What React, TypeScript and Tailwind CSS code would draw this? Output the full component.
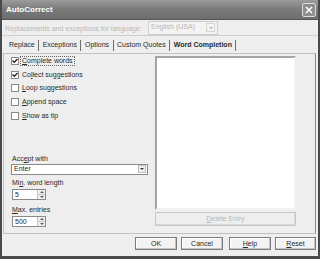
import React from "react";

const font = { fontFamily: '"Liberation Sans", Arial, sans-serif' };

function U({ children }: { children: React.ReactNode }) {
  return <span className="underline underline-offset-[1px] decoration-[0.5px]">{children}</span>;
}

function Check({ checked, children, focus }: { checked?: boolean; children: React.ReactNode; focus?: boolean }) {
  return (
    <div className="flex items-center h-[13.8px]">
      <div className="w-[8px] h-[8px] border border-[#8a8a8a] bg-white flex items-center justify-center mr-[2px] shrink-0">
        {checked && (
          <svg width="6" height="6" viewBox="0 0 6 6">
            <path d="M0.5 2.5 L2.3 4.3 L5.5 1" stroke="#222" strokeWidth="1.3" fill="none" />
          </svg>
        )}
      </div>
      <span className={focus ? "outline outline-1 outline-dotted outline-[#666] px-[1px] leading-[8px]" : "px-[1px] leading-[8px]"}>{children}</span>
    </div>
  );
}

function Spin({ value }: { value: string }) {
  return (
    <div className="flex w-[34px] h-[11px] border border-[#8a8a8a] bg-white">
      <div className="flex-1 pl-[2px] leading-[9px]">{value}</div>
      <div className="w-[8px] flex flex-col border-l border-[#c4c4c4] bg-[#f0f0f0]">
        <div className="flex-1 flex items-center justify-center border-b border-[#c4c4c4]">
          <svg width="4" height="2" viewBox="0 0 4 2"><path d="M0 2 L2 0 L4 2Z" fill="#555" /></svg>
        </div>
        <div className="flex-1 flex items-center justify-center">
          <svg width="4" height="2" viewBox="0 0 4 2"><path d="M0 0 L2 2 L4 0Z" fill="#555" /></svg>
        </div>
      </div>
    </div>
  );
}

function Btn({ children, w, extra = "" }: { children: React.ReactNode; w: string; extra?: string }) {
  return (
    <div className={`${w} ${extra} h-[13px] border border-[#7c7c7c] bg-[#f3f3f3] shadow-[inset_-1px_-1px_0_#c4c4c4,inset_1px_1px_0_#ffffff] flex items-center justify-center leading-[8px]`}>
      {children}
    </div>
  );
}

export default function App() {
  return (
    <div style={font} className="w-[320px] h-[259px] bg-[#eeeeee] text-[7px] text-[#2a2a2a] flex flex-col border-x-2 border-b-[3px] border-[#4a4a4a] overflow-hidden">
      {/* title */}
      <div className="h-[20px] shrink-0 flex items-center justify-between pl-[4px] pr-[2px] bg-gradient-to-b from-[#9c9c9c] via-[#7a7a7a] to-[#6e6e6e] border-b border-[#555]">
        <span className="text-white font-bold text-[8px] mt-[1px]">AutoCorrect</span>
        <div className="w-[14px] h-[14px] border border-[#dcdcdc] rounded-[2px] bg-[#8e8e8e] flex items-center justify-center">
          <svg width="8" height="8" viewBox="0 0 8 8">
            <path d="M1 1 L7 7 M7 1 L1 7" stroke="#fff" strokeWidth="1.6" />
          </svg>
        </div>
      </div>
      {/* language row */}
      <div className="h-[16px] shrink-0 flex items-center pl-[3px] border-b border-[#cfcfcf]">
        <span className="w-[143px] text-[#b8b8b8] mt-[3px]">Replacements and exceptions for language:</span>
        <div className="w-[70px] h-[14px] border border-[#cdcdcd] bg-[#f4f4f4] flex items-center">
          <span className="flex-1 pl-[2px] text-[#b4b4b4]">English (USA)</span>
          <div className="w-[9px] h-[9px] mr-[2px] border border-[#d4d4d4] flex items-center justify-center">
            <svg width="4" height="2" viewBox="0 0 4 2"><path d="M0 0 L2 2 L4 0Z" fill="#b0b0b0" /></svg>
          </div>
        </div>
      </div>
      {/* tabs */}
      <div className="h-[16px] shrink-0 mt-[1px] flex items-center pl-[5px]">
        {["Replace", "Exceptions", "Options", "Custom Quotes"].map((t) => (
          <div key={t} className="flex items-center">
            <span className="px-[2px]">{t}</span>
            <span className="w-px h-[11px] bg-[#707070] mx-[1.5px]" />
          </div>
        ))}
        <div className="flex items-center">
          <span className="px-[2px] font-bold">Word Completion</span>
          <span className="w-px h-[11px] bg-[#707070] ml-[1px]" />
        </div>
      </div>
      {/* panel */}
      <div className="h-[181px] shrink-0 ml-[1px] mr-[2px] border border-[#c2c2c2] border-r-[#8c8c8c] flex pl-[7px]">
        <div className="w-[138px] flex flex-col">
          <Check checked focus>
            <U>C</U>omplete words
          </Check>
          <Check checked>
            Co<U>l</U>lect suggestions
          </Check>
          <Check>
            <U>L</U>oop suggestions
          </Check>
          <Check>
            <U>A</U>ppend space
          </Check>
          <Check>
            <U>S</U>how as tip
          </Check>
          <div className="mt-[31px] pl-[1px] h-[9px] leading-[9px]">
            Acc<U>e</U>pt with
          </div>
          <div className="mt-[1px] w-[137px] h-[11px] border border-[#8a8a8a] bg-white flex items-center">
            <span className="flex-1 pl-[2px]">Enter</span>
            <div className="w-[8px] h-[8px] mr-[1px] border border-[#c0c0c0] bg-[#f0f0f0] flex items-center justify-center">
              <svg width="4" height="2" viewBox="0 0 4 2"><path d="M0 0 L2 2 L4 0Z" fill="#333" /></svg>
            </div>
          </div>
          <div className="mt-[3px] pl-[1px] h-[9px] leading-[9px]">
            Mi<U>n</U>. word length
          </div>
          <div className="mt-[2px] pl-[1px]">
            <Spin value="5" />
          </div>
          <div className="mt-[5px] pl-[1px] h-[9px] leading-[9px]">
            <U>M</U>ax. entries
          </div>
          <div className="mt-[2px] pl-[1px]">
            <Spin value="500" />
          </div>
        </div>
        <div className="ml-[6px] mt-[2px] w-[141px] flex flex-col">
          <div className="h-[154px] bg-white border-2 border-t-[#a4a4a4] border-l-[#a4a4a4] border-r-[#f2f2f2] border-b-[#f2f2f2]" />
          <div className="mt-[2px] h-[14px] border border-[#c8c8c8] shadow-[inset_-1px_-1px_0_#d8d8d8] flex items-center justify-center text-[#b8b8b8]">
            <U>D</U>elete Entry
          </div>
        </div>
      </div>
      {/* buttons */}
      <div className="flex-1 flex items-start justify-end pr-[2px] pt-[3px] gap-[4px]">
        <Btn w="w-[42px]">OK</Btn>
        <Btn w="w-[42px]">Cancel</Btn>
        <Btn w="w-[42px]" extra="ml-[2px]">
          <U>H</U>elp
        </Btn>
        <Btn w="w-[41px]">
          <U>R</U>eset
        </Btn>
      </div>
    </div>
  );
}
